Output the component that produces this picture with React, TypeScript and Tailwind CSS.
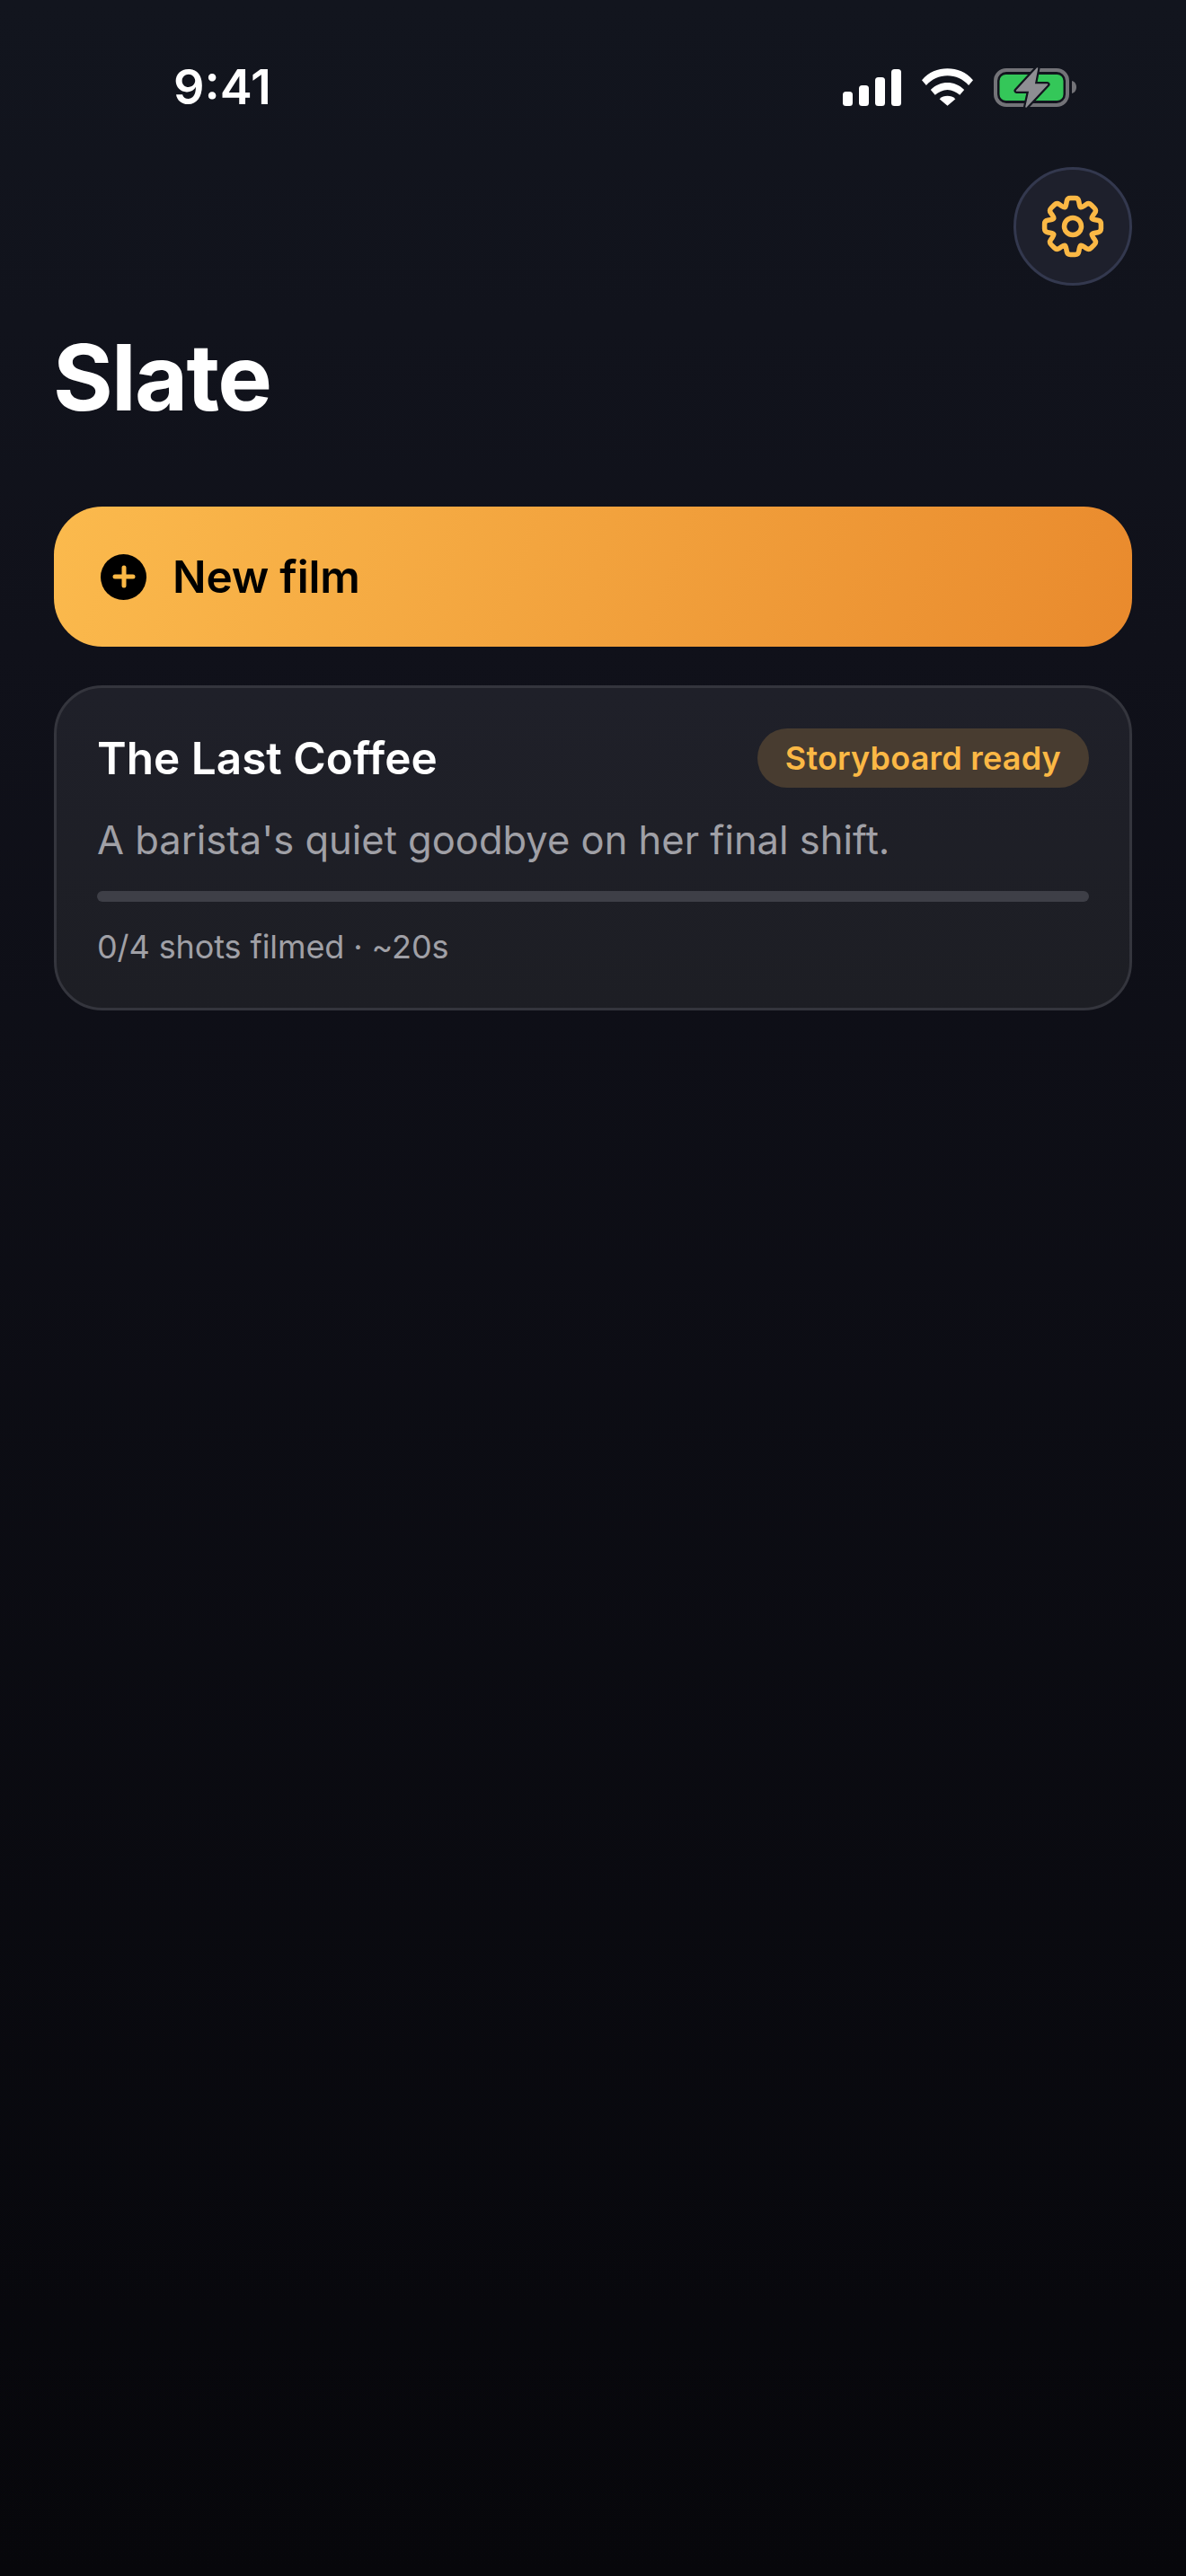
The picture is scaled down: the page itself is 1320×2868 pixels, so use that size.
// 8 tooth gear outline with rounded corners, centre 36,36
const gearPath = () => {
  const pts: [number, number][] = [];
  for (let i = 0; i < 8; i++) {
    const t = i * 45 - 90;
    [[23, -20], [32, -11], [32, 11], [23, 20]].forEach(([r, a]) => {
      const rad = ((t + a) * Math.PI) / 180;
      pts.push([36 + r * Math.cos(rad), 36 + r * Math.sin(rad)]);
    });
  }
  const toward = (a: [number, number], b: [number, number], d: number) => {
    const len = Math.hypot(b[0] - a[0], b[1] - a[1]);
    const k = Math.min(d, len / 2) / len;
    return `${(a[0] + (b[0] - a[0]) * k).toFixed(2)} ${(a[1] + (b[1] - a[1]) * k).toFixed(2)}`;
  };
  return (
    pts
      .map((p, i) => {
        const prev = pts[(i + pts.length - 1) % pts.length];
        const next = pts[(i + 1) % pts.length];
        return `${i === 0 ? 'M' : 'L'}${toward(p, prev, 3.5)}Q${p[0].toFixed(2)} ${p[1].toFixed(2)} ${toward(p, next, 3.5)}`;
      })
      .join('') + 'Z'
  );
};

const bolt = 'M48.500 1 25.500 26H40l-4 18 23.500-25H45z';

const StatusIcons = () => (
  <div className="flex items-center gap-[23px]">
    <svg width="65" height="41" viewBox="0 0 65 41" fill="#fff">
      <rect x="0" y="25" width="11" height="16" rx="3.5" />
      <rect x="18" y="18" width="11" height="23" rx="3.5" />
      <rect x="36" y="9" width="11" height="32" rx="3.5" />
      <rect x="54" y="0" width="11" height="41" rx="3.5" />
    </svg>
    <svg width="57" height="42" viewBox="0 0 58 42" fill="#fff">
      <path d="M29 0C18 0 8 4 0 13l5 6c6-7 15-11 24-11s18 4 24 11l5-6C50 4 40 0 29 0z" />
      <path d="M29 16c-7 0-13 2.500-19 8l5 6c4-3.500 9-6 14-6s10 2.500 14 6l5-6c-6-5.500-12-8-19-8z" />
      <path d="M29 31c-3.500 0-6.500 1-9 3.500L29 42l9-7.500C35.500 32 32.500 31 29 31z" />
    </svg>
    <svg width="92" height="45" viewBox="0 0 92 45">
      <rect x="2" y="3" width="80" height="39" rx="12" fill="none" stroke="#737378" strokeWidth="4" />
      <rect x="6.500" y="8" width="71" height="29" rx="7" fill="#34c759" />
      <path d="M87 15c3.500 1 5 4 5 7s-1.500 6-5 7z" fill="#737378" />
      <path d={bolt} fill="#12151e" stroke="#12151e" strokeWidth="6" strokeLinejoin="round" />
      <path d={bolt} fill="#8e8e93" stroke="#8e8e93" strokeWidth="1.5" strokeLinejoin="round" />
    </svg>
  </div>
);

export default function App() {
  return (
    <div className="min-h-[2868px] bg-linear-to-b from-[#12151e] via-[#10111a] via-25% to-[#07070b] font-['Inter',sans-serif] text-white">
      <div className="h-[186px] pt-[70px] pr-[122px] pl-[193px]">
        <div className="flex h-[54px] items-center justify-between">
          <span className="text-[54px] leading-[54px] font-semibold">9:41</span>
          <StatusIcons />
        </div>
      </div>

      <div className="px-[60px]">
        <div className="flex justify-end">
          <button className="flex h-[132px] w-[132px] items-center justify-center rounded-full border-[3px] border-[#33384e] bg-[#1e202c]">
            <svg width="72" height="72" viewBox="0 0 72 72" fill="none" stroke="#fbb845" strokeWidth="5.5">
              <path d={gearPath()} strokeLinejoin="round" />
              <circle cx="36" cy="36" r="9.500" />
            </svg>
          </button>
        </div>

        <h1 className="mt-[40px] -ml-[1px] text-[102px] leading-[124px] font-bold tracking-[-1.7px]">Slate</h1>

        <button className="mt-[82px] flex h-[156px] w-full items-center gap-[29px] rounded-[54px] bg-linear-[110deg] from-[#fbba4d] to-[#e98a2d] pl-[52px] text-black">
          <span className="flex h-[51px] w-[51px] items-center justify-center rounded-full bg-black">
            <svg width="26" height="26" viewBox="0 0 26 26" fill="none" stroke="#fbb845" strokeWidth="5" strokeLinecap="round">
              <path d="M3 13h20M13 3v20" />
            </svg>
          </span>
          <span className="text-[49.5px] leading-[60px] font-semibold tracking-[-0.2px]">New film</span>
        </button>

        <div className="mt-[43px] rounded-[54px] border-[3px] border-[#34353d] bg-linear-to-b from-[#1f2029] to-[#1d1e24] px-[45px] pt-[45px] pb-[44px]">
          <div className="flex items-center justify-between">
            <h2 className="text-[49.5px] leading-[60px] font-semibold">The Last Coffee</h2>
            <span className="flex h-[66px] items-center rounded-full bg-[#483c30] px-[31px] text-[36px] font-semibold tracking-[0.2px] text-[#fbb845]">
              Storyboard ready
            </span>
          </div>
          <p className="mt-[31px] text-[43.5px] leading-[54px] text-[#a0a0a6]">A barista's quiet goodbye on her final shift.</p>
          <div className="mt-[30px] h-[12px] rounded-full bg-[#3e3f47]" />
          <p className="mt-[26px] text-[36px] leading-[48px] tracking-[-0.1px] text-[#a0a0a6]">0/4 shots filmed · ~20s</p>
        </div>
      </div>
    </div>
  );
}
